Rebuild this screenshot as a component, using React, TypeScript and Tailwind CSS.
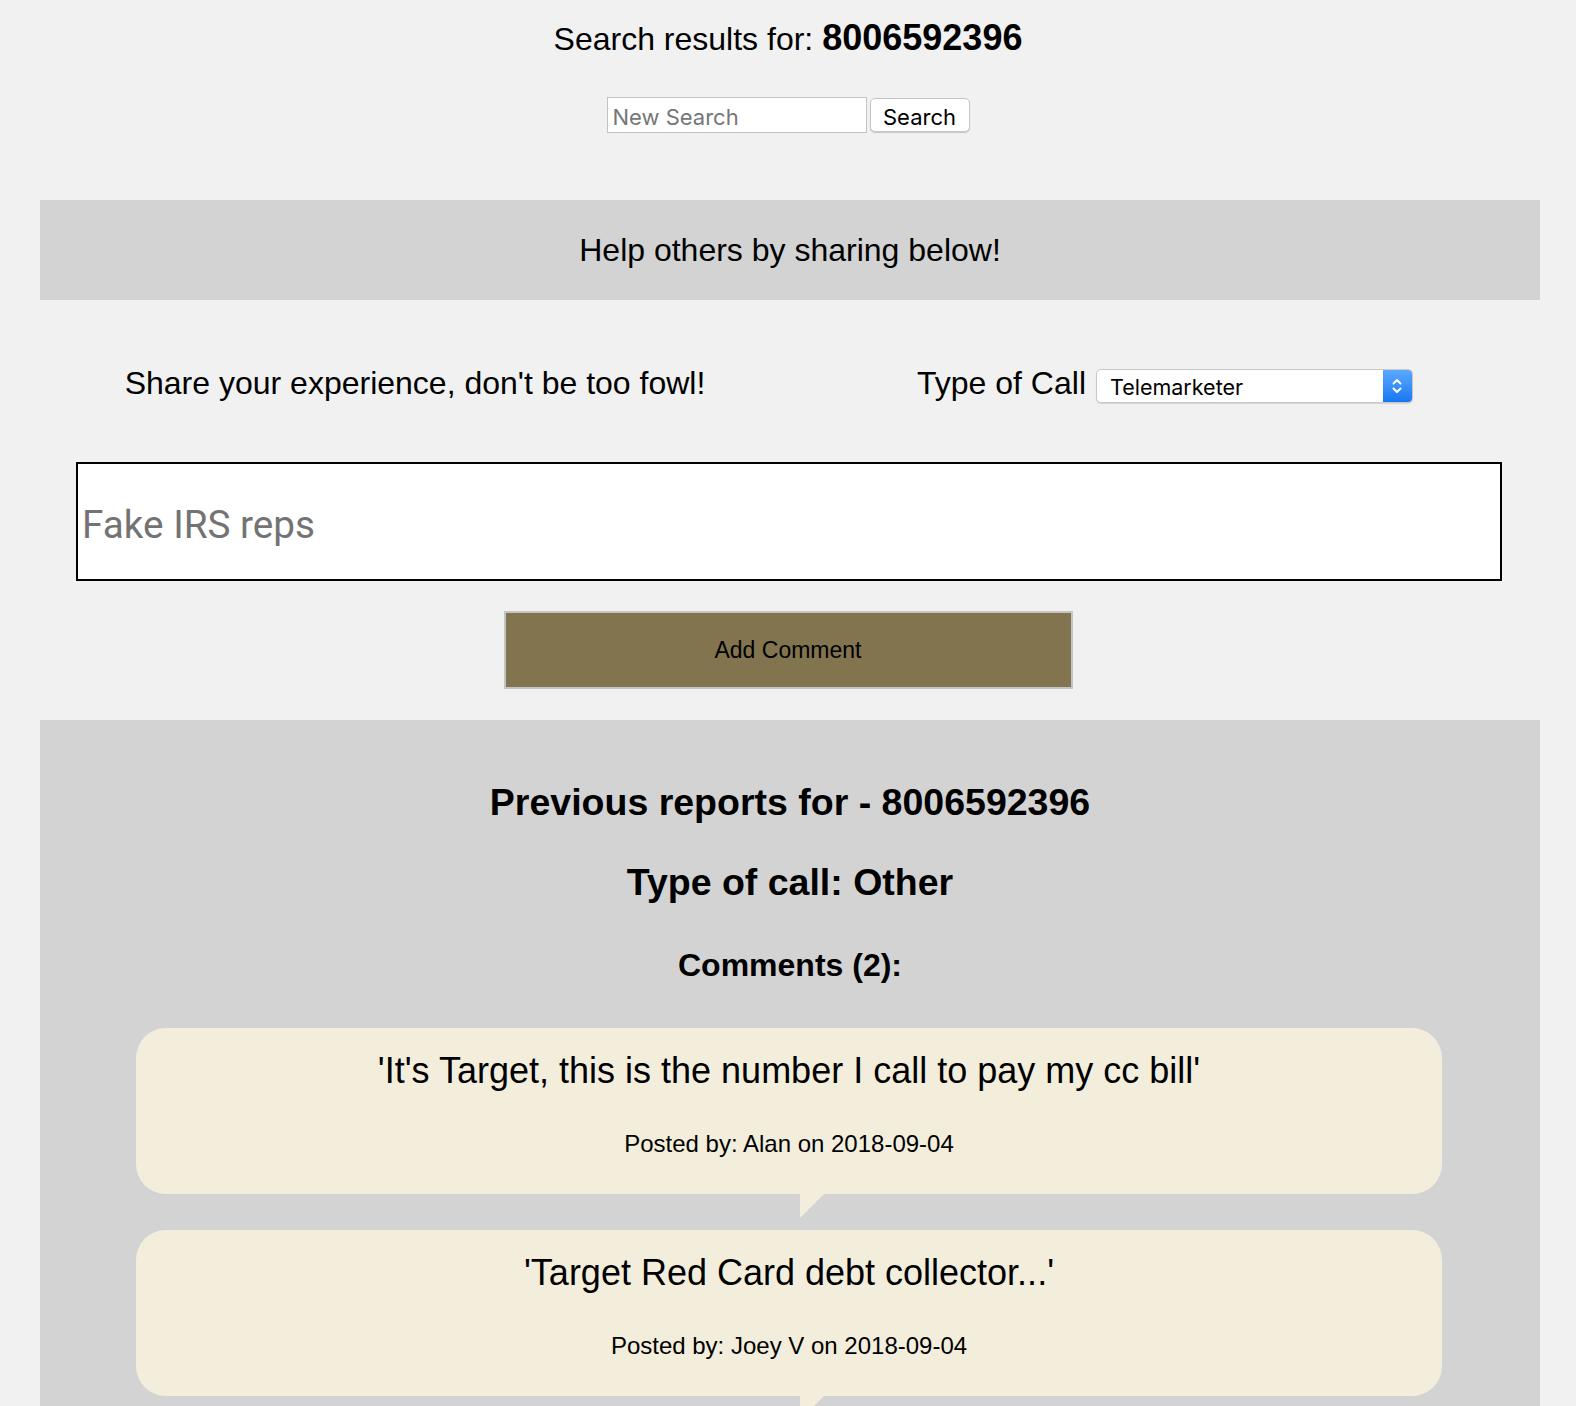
import React from "react";

function Bubble({ text, by }: { text: string; by: string }) {
  return (
    <div className="relative rounded-[30px] bg-[#f3eedc] pt-[25px] pb-[38px] text-center">
      <div className="text-[36px] leading-none">{text}</div>
      <div className="mt-[43px] text-[24px] leading-none">{by}</div>
      <div className="absolute top-full left-[calc(50%+11px)] h-0 w-0 border-t-[24px] border-r-[24px] border-t-[#f3eedc] border-r-transparent" />
    </div>
  );
}

export default function App() {
  return (
    <div className="min-h-screen bg-[#f1f1f1] pb-0 text-black font-['Liberation_Sans',Arial,Helvetica,sans-serif]">
      <div className="flex items-baseline justify-center gap-[9px] pt-[20px]">
        <span className="text-[32px] leading-none">Search results for:</span>
        <b className="text-[36px] leading-none">8006592396</b>
      </div>

      <form className="mt-[41px] flex justify-center gap-[3px]" onSubmit={(e) => e.preventDefault()}>
        <input
          type="text"
          placeholder="New Search"
          className="h-[36px] w-[260px] border border-[#c3c3c3] bg-white px-[5px] pt-[3px] font-['Inter',sans-serif] text-[22px] outline-none placeholder:text-[#767676]"
        />
        <button
          type="submit"
          className="mt-[1px] h-[34px] w-[100px] rounded-[5px] border border-[#c6c6c6] bg-white pt-[3px] font-['Inter',sans-serif] text-[22px] leading-none shadow-[0_1px_1px_rgba(0,0,0,0.18)]"
        >
          Search
        </button>
      </form>

      <div className="ml-[40px] mr-[36px] mt-[67px] flex h-[100px] items-center justify-center bg-[#d3d3d3] text-[32px] leading-none">
        Help others by sharing below!
      </div>

      <div className="ml-[40px] mr-[36px] mt-[67px] grid grid-cols-2 items-start">
        <div className="text-center text-[32px] leading-none">Share your experience, don't be too fowl!</div>
        <div className="flex justify-center gap-[10px]">
          <span className="text-[32px] leading-none">Type of Call</span>
          <div className="relative mt-[2px] h-[34px] w-[317px] overflow-hidden rounded-[5px] border border-[#c8c8c8] bg-white shadow-[0_1px_1px_rgba(0,0,0,0.12)]">
            <select
              defaultValue="Telemarketer"
              className="h-full w-full appearance-none bg-transparent pl-[13px] pt-[1px] font-['Inter',sans-serif] text-[21.5px] text-black outline-none"
            >
              <option>Telemarketer</option>
              <option>Scam</option>
              <option>Debt Collector</option>
              <option>Other</option>
            </select>
            <div className="pointer-events-none absolute right-0 top-0 flex h-full w-[29px] items-center justify-center bg-gradient-to-b from-[#5aa8ff] to-[#1677f2]">
              <svg width="12" height="20" viewBox="0 0 12 20" fill="none" stroke="white" strokeWidth="2" strokeLinecap="round" strokeLinejoin="round">
                <path d="M2.5 7.5 L6 4 L9.5 7.5" />
                <path d="M2.5 12.5 L6 16 L9.5 12.5" />
              </svg>
            </div>
          </div>
        </div>
      </div>

      <input
        type="text"
        placeholder="Fake IRS reps"
        className="ml-[76px] mt-[59px] block h-[119px] w-[1426px] border-2 border-black bg-white px-[4px] pt-[5px] font-['Roboto',sans-serif] text-[38.7px] outline-none placeholder:text-[#737373]"
      />

      <button
        type="button"
        className="mx-auto mt-[30px] block h-[78px] w-[569px] border-2 border-[#c4c4c4] bg-[#82744f] text-[23px] leading-none text-black"
      >
        Add Comment
      </button>

      <div className="ml-[40px] mr-[36px] mt-[31px] bg-[#d3d3d3] pt-[64px] pb-[60px] text-center">
        <h2 className="text-[37.5px] font-bold leading-none">Previous reports for - 8006592396</h2>
        <h2 className="mt-[42px] text-[37.5px] font-bold leading-none">Type of call: Other</h2>
        <h3 className="mt-[48px] text-[32px] font-bold leading-none">Comments (2):</h3>
        <div className="ml-[96px] mr-[98px] mt-[47px] flex flex-col gap-[36px]">
          <Bubble text="'It's Target, this is the number I call to pay my cc bill'" by="Posted by: Alan on 2018-09-04" />
          <Bubble text="'Target Red Card debt collector...'" by="Posted by: Joey V on 2018-09-04" />
        </div>
      </div>
    </div>
  );
}
